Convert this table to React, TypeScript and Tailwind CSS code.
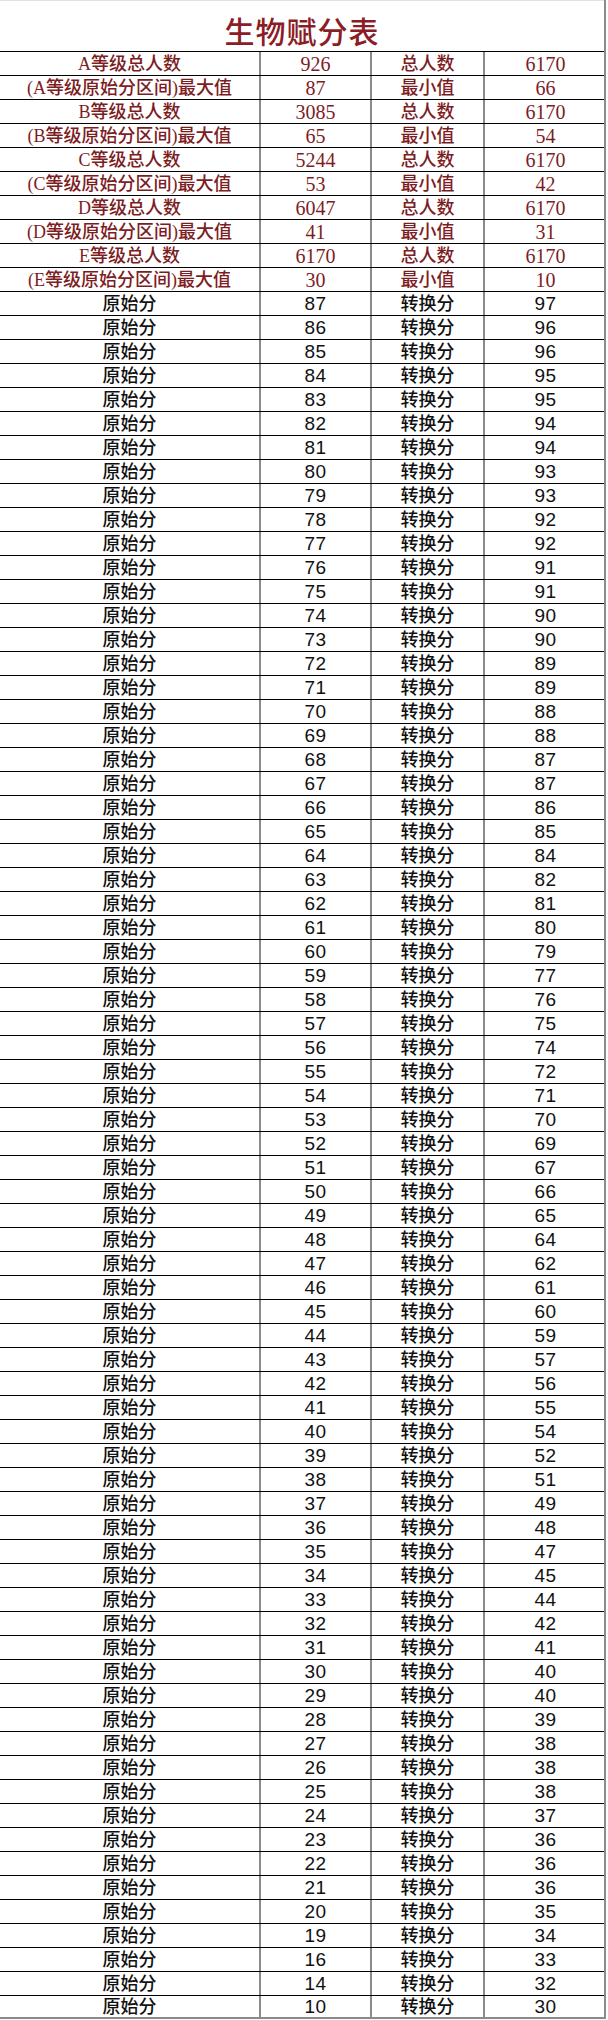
const header: [string, string, string, string][] = [
  ["A等级总人数", "926", "总人数", "6170"],
  ["(A等级原始分区间)最大值", "87", "最小值", "66"],
  ["B等级总人数", "3085", "总人数", "6170"],
  ["(B等级原始分区间)最大值", "65", "最小值", "54"],
  ["C等级总人数", "5244", "总人数", "6170"],
  ["(C等级原始分区间)最大值", "53", "最小值", "42"],
  ["D等级总人数", "6047", "总人数", "6170"],
  ["(D等级原始分区间)最大值", "41", "最小值", "31"],
  ["E等级总人数", "6170", "总人数", "6170"],
  ["(E等级原始分区间)最大值", "30", "最小值", "10"],
];

// 原始分 -> 转换分
const scores: [number, number][] = [
  [87, 97], [86, 96], [85, 96], [84, 95], [83, 95], [82, 94], [81, 94], [80, 93],
  [79, 93], [78, 92], [77, 92], [76, 91], [75, 91], [74, 90], [73, 90], [72, 89],
  [71, 89], [70, 88], [69, 88], [68, 87], [67, 87], [66, 86], [65, 85], [64, 84],
  [63, 82], [62, 81], [61, 80], [60, 79], [59, 77], [58, 76], [57, 75], [56, 74],
  [55, 72], [54, 71], [53, 70], [52, 69], [51, 67], [50, 66], [49, 65], [48, 64],
  [47, 62], [46, 61], [45, 60], [44, 59], [43, 57], [42, 56], [41, 55], [40, 54],
  [39, 52], [38, 51], [37, 49], [36, 48], [35, 47], [34, 45], [33, 44], [32, 42],
  [31, 41], [30, 40], [29, 40], [28, 39], [27, 38], [26, 38], [25, 38], [24, 37],
  [23, 36], [22, 36], [21, 36], [20, 35], [19, 34], [16, 33], [14, 32], [10, 30],
];

const serif = "font-['Liberation_Serif','Noto_Sans_CJK_SC',serif]";
const sans = "font-['Liberation_Sans','Noto_Sans_CJK_SC',sans-serif]";
const row = "grid grid-cols-[259px_111px_113px_123px] h-[24px] border-t border-black";
const cell = "flex items-center justify-center leading-none";
const divider = "border-l-2 border-[#8a8a8a]";

export default function App() {
  return (
    <div className="w-[608px] bg-white">
      <div className="w-[606px] border-r-2 border-[#8a8a8a]">
        {/* 标题 */}
        <div className="h-[51px] border-t border-[#e2e2e2] flex justify-center pt-[17px]">
          <h1 className={`${serif} text-[30px] leading-none font-medium text-[#8b1d26] tracking-[1px]`}>
            生物赋分表
          </h1>
        </div>

        {/* 等级区间 */}
        {header.map((r, i) => (
          <div key={i} className={`${row} text-[#7d1d1f]`}>
            <div className={`${cell} ${serif} text-[18px] font-medium`}>{r[0]}</div>
            <div className={`${cell} ${divider} ${serif} text-[20px]`}>{r[1]}</div>
            <div className={`${cell} ${divider} ${serif} text-[18px] font-medium`}>{r[2]}</div>
            <div className={`${cell} ${divider} ${serif} text-[20px]`}>{r[3]}</div>
          </div>
        ))}

        {/* 赋分对照 */}
        {scores.map(([raw, conv], i) => (
          <div
            key={raw}
            className={`${row} text-[#111] ${i === scores.length - 1 ? "border-b-2 border-b-[#8a8a8a]" : ""}`}
          >
            <div className={`${cell} ${serif} text-[18px] font-medium`}>原始分</div>
            <div className={`${cell} ${divider} ${sans} text-[19px] tracking-[0.5px]`}>{raw}</div>
            <div className={`${cell} ${divider} ${serif} text-[18px] font-medium`}>转换分</div>
            <div className={`${cell} ${divider} ${sans} text-[19px] tracking-[0.5px]`}>{conv}</div>
          </div>
        ))}
      </div>
    </div>
  );
}
